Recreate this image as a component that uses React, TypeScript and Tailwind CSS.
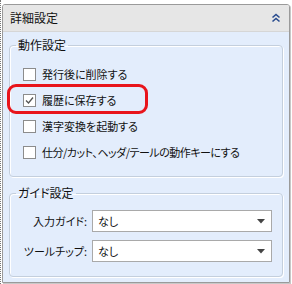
import React from "react";

const font = "font-['Meiryo_UI','Noto_Sans_CJK_JP',sans-serif] [font-feature-settings:'palt']";

function Check({ checked, label, tight }: { checked?: boolean; label: string; tight?: boolean }) {
  return (
    <div className="flex h-[26px] items-center">
      <div className="ml-[13px] flex h-[13px] w-[13px] items-center justify-center border border-[#8c8c8c] bg-white">
        {checked && (
          <svg width="9" height="9" viewBox="0 0 9 9">
            <path d="M1 4.5 L3.5 7 L8 1.5" fill="none" stroke="#555" strokeWidth="1.3" />
          </svg>
        )}
      </div>
      <span className={`ml-[6px] text-[11px] leading-none text-[#111] ${tight ? "tracking-[-0.5px]" : ""}`}>{label}</span>
    </div>
  );
}

function Select({ label }: { label: string }) {
  return (
    <>
      <div className="flex h-[22px] items-center justify-end text-[11px] text-[#111]">{label}</div>
      <div className="flex h-[22px] w-[180px] items-center justify-between border border-[#a9a9a9] bg-white pl-[5px] pr-[6px] text-[11px] text-[#111]">
        <span>なし</span>
        <svg width="8" height="5" viewBox="0 0 8 5">
          <path d="M0 0 H8 L4 4.5 Z" fill="#444" />
        </svg>
      </div>
    </>
  );
}

export default function App() {
  return (
    <div className={`relative h-[284px] w-[292px] border-l border-dotted border-[#777] bg-white ${font}`}>
      <div className="absolute left-[1px] top-[4px] h-[279px] w-[288px] overflow-hidden rounded-t-[3px] border border-[#9a9a9a] shadow-[1px_1px_0_#c8c8c8]">
        <div className="flex h-[27px] items-center justify-between border-b border-[#d6d6d6] bg-[#e6e6e6] pl-[7px] pr-[8px]">
          <span className="text-[12px] text-[#111]">詳細設定</span>
          <svg width="10" height="10" viewBox="0 0 10 10">
            <path d="M1.5 4.5 L5 1.5 L8.5 4.5 M1.5 8.5 L5 5.5 L8.5 8.5" fill="none" stroke="#2a4d8f" strokeWidth="1.6" />
          </svg>
        </div>
        <div className="flex h-[251px] flex-col bg-[#e3edfc] px-[6px] pt-[5px]">
          <fieldset className="rounded-[4px] border border-[#c4cfdd] px-[6px] pb-[11px] pt-[8px] shadow-[inset_1px_1px_0_#fff,1px_1px_0_#fff]">
            <legend className="px-[2px] text-[12px] leading-[16px] text-[#111]">動作設定</legend>
            <div className="-ml-[6px]">
              <Check label="発行後に削除する" />
              <Check checked label="履歴に保存する" />
              <Check label="漢字変換を起動する" />
              <Check tight label="仕分/カット、ヘッダ/テールの動作キーにする" />
            </div>
          </fieldset>
          <fieldset className="mt-[8px] rounded-[4px] border border-[#c4cfdd] px-[6px] pb-[14px] pt-[9px] shadow-[inset_1px_1px_0_#fff,1px_1px_0_#fff]">
            <legend className="px-[2px] text-[12px] leading-[16px] text-[#111]">ガイド設定</legend>
            <div className="grid grid-cols-[71px_180px] gap-x-[5px] gap-y-[8px]">
              <Select label="入力ガイド:" />
              <Select label="ツールチップ:" />
            </div>
          </fieldset>
        </div>
      </div>
      <div className="absolute left-[6px] top-[84px] h-[30px] w-[141px] rounded-[9px] border-[3px] border-[#e8141b]" />
    </div>
  );
}
